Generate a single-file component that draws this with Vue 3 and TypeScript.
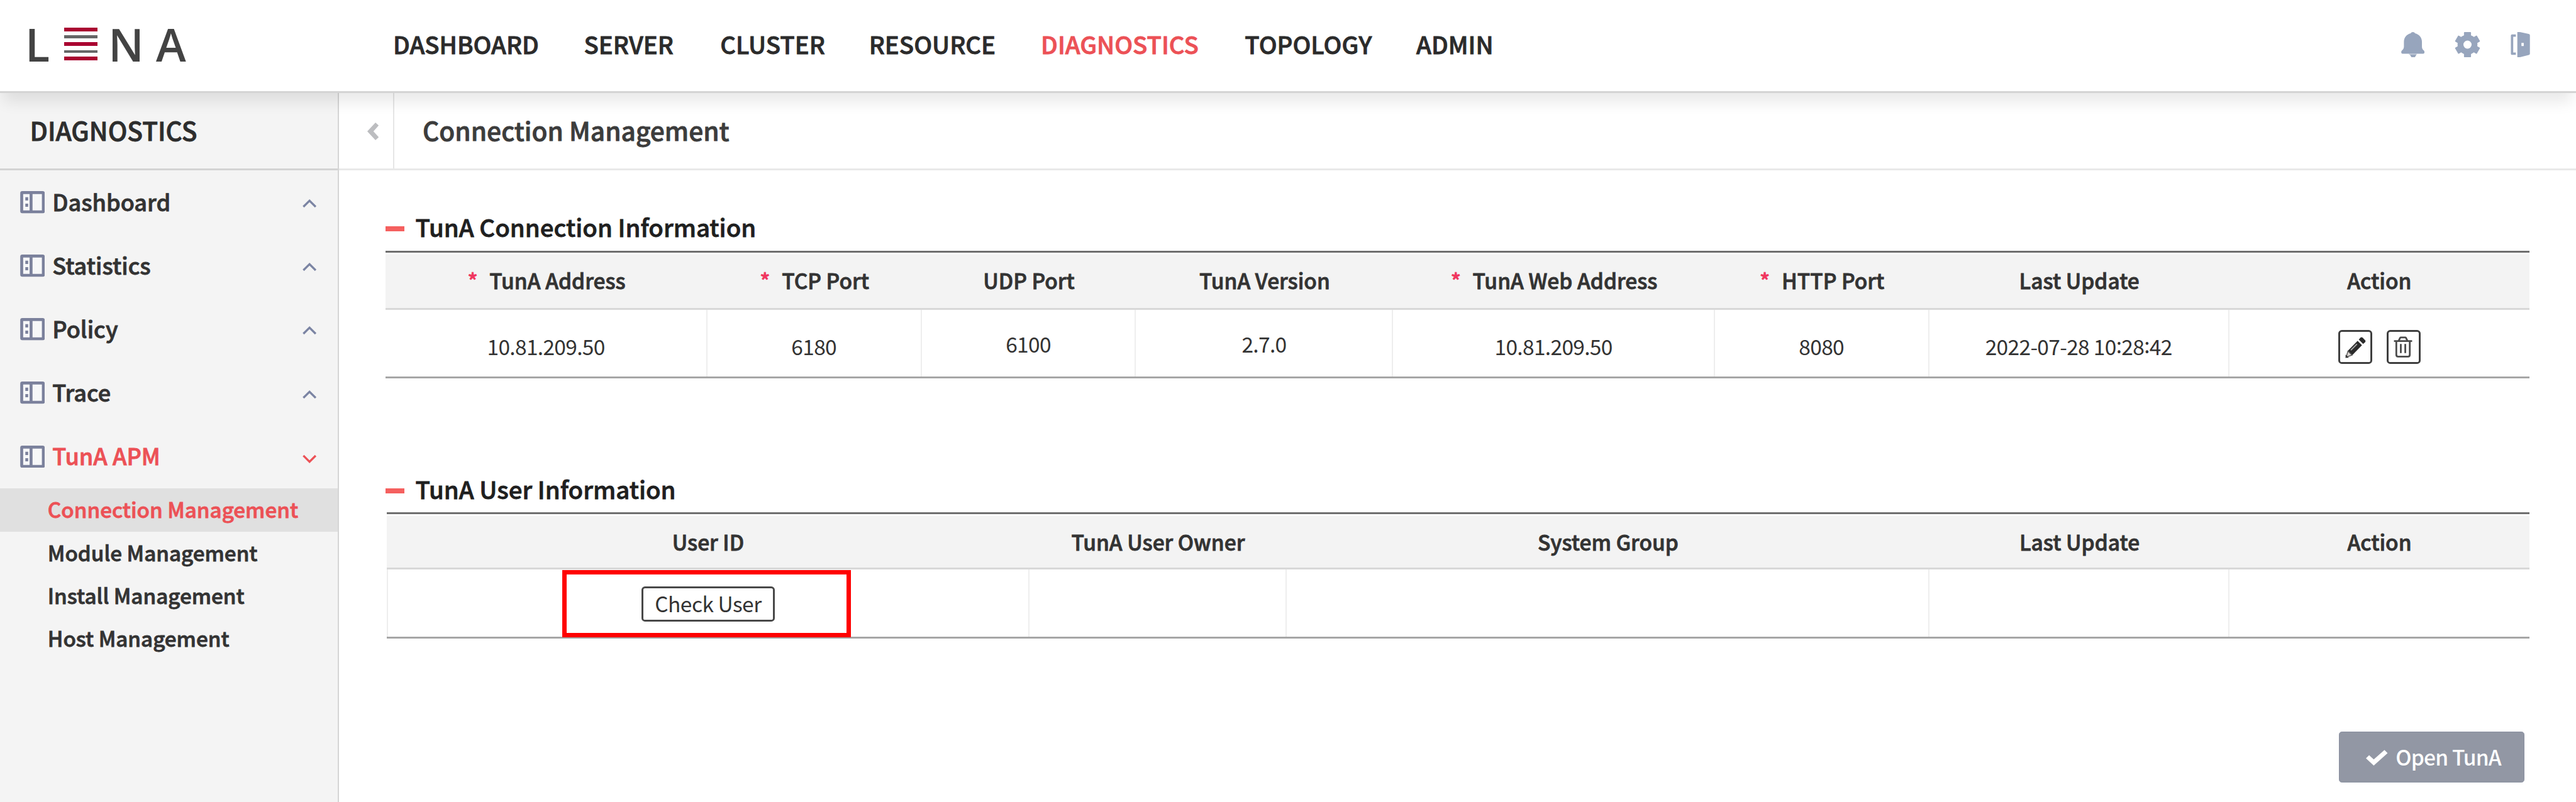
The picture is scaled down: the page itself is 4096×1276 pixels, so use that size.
<script setup lang="ts">
interface NavItem { label: string; active?: boolean }
interface Column { label: string; required?: boolean }

const nav: NavItem[] = [
  { label: 'DASHBOARD' },
  { label: 'SERVER' },
  { label: 'CLUSTER' },
  { label: 'RESOURCE' },
  { label: 'DIAGNOSTICS', active: true },
  { label: 'TOPOLOGY' },
  { label: 'ADMIN' },
]

const menu: NavItem[] = [
  { label: 'Dashboard' },
  { label: 'Statistics' },
  { label: 'Policy' },
  { label: 'Trace' },
  { label: 'TunA APM', active: true },
]

const submenu: NavItem[] = [
  { label: 'Connection Management', active: true },
  { label: 'Module Management' },
  { label: 'Install Management' },
  { label: 'Host Management' },
]

const connectionColumns: Column[] = [
  { label: 'TunA Address', required: true },
  { label: 'TCP Port', required: true },
  { label: 'UDP Port' },
  { label: 'TunA Version' },
  { label: 'TunA Web Address', required: true },
  { label: 'HTTP Port', required: true },
  { label: 'Last Update' },
  { label: 'Action' },
]

const userColumns = ['User ID', 'TunA User Owner', 'System Group', 'Last Update', 'Action']
</script>

<template>
  <div class="app">
    <header class="topbar">
      <div class="logo">
        <span class="logo-l">L</span>
        <span class="logo-bars"><i></i><i></i><i></i><i></i><i></i></span>
        <span class="logo-n">N</span>
        <span class="logo-a">A</span>
      </div>
      <nav class="nav">
        <a v-for="item in nav" :key="item.label" :class="{ active: item.active }">{{ item.label }}</a>
      </nav>
      <div class="tools">
        <svg class="bell" viewBox="0 0 40 43">
          <path d="M20 0c2 0 3 .9 3.7 2.2C31 4.200 35.500 9.500 35.500 17v8c0 3 1.200 5 3.400 6.800 1.500 1.400 1.300 5.200-1.200 5.200H2.300C-.2 37-.4 33.200 1.100 31.800 3.300 30 4.700 28 4.700 25v-8C4.700 9.500 9 4.200 16.300 2.200 17 .9 18 0 20 0z" />
          <path d="M13.500 37h13v1.800h-13z" opacity=".6" />
          <path d="M15 38.800h11l-2.500 4.200h-6z" />
        </svg>
        <svg class="gear" viewBox="-22 -21.500 44 43">
          <circle r="12" fill="none" stroke="#97a5bd" stroke-width="10" />
          <rect v-for="n in 6" :key="n" x="-6" y="-21.500" width="12" height="9" rx="1" :transform="`rotate(${n * 60})`" />
        </svg>
        <svg class="door" viewBox="0 0 34 43">
          <path d="M9 6H2.500v31H9" fill="none" stroke="#97a5bd" stroke-width="4" stroke-linejoin="round" />
          <path fill-rule="evenodd" d="M11.500 0H16l15 3.200q2 .4 2 2.300v31.500q0 1.800-2 2.200L16 43h-4.500zM18.500 18.500v5.500h4v-5.500z" />
        </svg>
      </div>
    </header>

    <div class="body">
      <aside class="sidebar">
        <h2 class="side-title">DIAGNOSTICS</h2>
        <ul class="menu">
          <li v-for="item in menu" :key="item.label" :class="{ active: item.active }">
            <svg class="panel" viewBox="0 0 42 38">
              <rect x="2.500" y="2.500" width="37" height="33" rx="1" fill="#f6f7f8" stroke="#7b819c" stroke-width="5" />
              <path d="M16 2h5v34h-5zM8.700 10.500h4.800v5.500H8.700zM8.700 21.500h4.800V27H8.700z" fill="#7b819c" />
            </svg>
            <span>{{ item.label }}</span>
            <svg class="caret" viewBox="0 0 24 16">
              <path :d="item.active ? 'M1.500 2 12 12.500 22.500 2' : 'M1.500 14 12 3.500 22.500 14'" />
            </svg>
          </li>
        </ul>
        <ul class="submenu">
          <li v-for="item in submenu" :key="item.label" :class="{ active: item.active }">{{ item.label }}</li>
        </ul>
      </aside>

      <main class="main">
        <div class="page-head">
          <div class="collapse">
            <svg viewBox="0 0 20 30"><path d="M14 0 19.500 5 10.500 15 19.500 25 14 30 0 15z" /></svg>
          </div>
          <h1>Connection Management</h1>
        </div>

        <div class="content">
          <h3 class="section-title"><i></i>TunA Connection Information</h3>
          <div class="table connection">
            <div class="row head">
              <div v-for="col in connectionColumns" :key="col.label" class="cell">
                <b v-if="col.required">*</b>{{ col.label }}
              </div>
            </div>
            <div class="row data">
              <div class="cell">10.81.209.50</div>
              <div class="cell">6180</div>
              <div class="cell raised">6100</div>
              <div class="cell raised">2.7.0</div>
              <div class="cell">10.81.209.50</div>
              <div class="cell">8080</div>
              <div class="cell"><span>2022-07-28 10<em>:</em>28<em>:</em>42</span></div>
              <div class="cell actions">
                <button class="icon-btn">
                  <svg viewBox="0 0 58 58">
                    <path d="M16.500 35.500 33 18.500l7.500 7.500L24 43z" fill="#2b2b2b" />
                    <path d="M35 16.500l3-3.300q1.700-1.600 3.600 0l4.200 4.200q1.700 1.700 0 3.600L42.500 24z" fill="#2b2b2b" />
                    <path d="M16.500 36 23.500 43 13.500 46.500z" fill="#d9d4d0" stroke="#555" stroke-width="1.500" />
                    <path d="M12.500 42v5.500H18z" fill="#333" />
                    <path d="M21.500 34.500 32 24" stroke="#aaa" stroke-width="2" />
                  </svg>
                </button>
                <button class="icon-btn">
                  <svg viewBox="0 0 58 58" fill="none" stroke="#4a4a4a" stroke-width="3">
                    <path d="M13.500 19h31M21.500 18.500l2.500-5q.5-.8 1.500-.8h7q1 0 1.500.8l2.500 5M17.500 19v23.500q0 3 3 3h17q3 0 3-3V19M25.200 24v15.500M32.800 24v15.500" />
                  </svg>
                </button>
              </div>
            </div>
          </div>

          <h3 class="section-title second"><i></i>TunA User Information</h3>
          <div class="table user">
            <div class="row head">
              <div v-for="label in userColumns" :key="label" class="cell">{{ label }}</div>
            </div>
            <div class="row data">
              <div class="cell user-cell">
                <button class="check-btn">Check User</button>
                <span class="highlight"></span>
              </div>
              <div class="cell"></div>
              <div class="cell"></div>
              <div class="cell"></div>
              <div class="cell"></div>
            </div>
          </div>

          <div class="footer">
            <button class="open-btn">
              <svg viewBox="0 0 38 27"><path d="M0 14.500 5.500 9 13.500 16.500 32 0 37.500 5.500 13.500 27z" /></svg>
              <span>Open TunA</span>
            </button>
          </div>
        </div>
      </main>
    </div>
  </div>
</template>

<style>
/* 1rem is ten design pixels of a 4400px wide layout */
html { font-size: calc(100vw / 440); }
body { margin: 0; overflow: hidden; background: #fff; }
</style>

<style scoped>
.app {
  height: 100vh;
  display: flex;
  flex-direction: column;
  overflow: hidden;
  font-family: "Noto Sans CJK KR", "Noto Sans", sans-serif;
  font-size: 3.6rem;
  font-weight: 500;
  color: #333;
}
h1, h2, h3, ul { margin: 0; padding: 0; font-weight: 500; list-style: none; }
button { margin: 0; padding: 0; font: inherit; color: inherit; box-sizing: border-box; }
svg { display: block; flex: none; }
/* headings and menus sit between medium and bold */
.nav, .side-title, .menu, .submenu, h1, .section-title, .head { -webkit-text-stroke: .09rem currentColor; }

.topbar {
  flex: none;
  box-sizing: border-box;
  height: 15.9rem;
  display: flex;
  align-items: center;
  border-bottom: .33rem solid #d4d4d4;
  background: #fff;
  box-shadow: 0 2.1rem 2.4rem -.6rem rgba(0, 0, 0, .09);
  position: relative;
  z-index: 2;
}
.logo {
  display: flex;
  align-items: center;
  width: 62.85rem;
  padding-left: 4.3rem;
  padding-bottom: .5rem;
  font: 600 7.75rem/7rem "Open Sans", sans-serif;
  color: #434343;
}
.logo-l { width: 6.65rem; }
.logo-bars {
  width: 5.7rem;
  height: 5.6rem;
  display: flex;
  flex-direction: column;
  justify-content: space-between;
}
.logo-bars i { height: .64rem; background: #a90330; }
.logo-bars i:nth-child(even) { height: .46rem; background: #666; }
.logo-n { width: 8.15rem; padding-left: 1.85rem; }
.logo-a { width: 6rem; }
.nav {
  display: grid;
  grid-template-columns: 32.6rem 23.28rem 25.4rem 29.37rem 34.83rem 29.3rem 15rem;
  font-size: 4.12rem;
  line-height: 6rem;
  padding-bottom: .6rem;
  color: #2b2b2b;
  white-space: nowrap;
}
.nav .active, .menu .active, .submenu .active { color: #ec5156; }
.tools {
  margin-left: auto;
  padding: 0 7.8rem .3rem 0;
  display: flex;
  align-items: center;
  fill: #97a5bd;
}
.bell { width: 4rem; height: 4.3rem; }
.gear { width: 4.4rem; height: 4.3rem; margin-left: 5.15rem; }
.door { width: 3.4rem; height: 4.3rem; margin-left: 5.1rem; }

.body { flex: 1; display: flex; min-height: 0; }
.sidebar {
  flex: none;
  box-sizing: border-box;
  width: 57.9rem;
  background: #f4f4f4;
  border-right: .25rem solid #d5d5d5;
}
.side-title {
  box-sizing: border-box;
  height: 13.25rem;
  padding: 3.35rem 0 0 5.1rem;
  border-bottom: .33rem solid #d3d3d3;
  font-size: 4.37rem;
  line-height: 6rem;
  color: #2d2d2d;
}
.menu li {
  display: flex;
  align-items: center;
  height: 10.86rem;
  padding: 0 3.65rem 0 3.43rem;
  font-size: 3.88rem;
  line-height: 6rem;
}
.panel { width: 4.24rem; height: 3.8rem; margin-right: 1.27rem; }
.menu span { padding-bottom: .3rem; }
.caret {
  width: 2.4rem;
  height: 1.6rem;
  margin-left: auto;
  margin-top: .4rem;
  fill: none;
  stroke: #7b84a3;
  stroke-width: 3.6;
}
.active .caret { stroke: #ec5156; margin-top: .8rem; }
.submenu li {
  height: 7.3rem;
  padding-left: 8.15rem;
  font-size: 3.57rem;
  line-height: 7rem;
}
.submenu .active { background: #e0e0e0; height: 7.45rem; }

.main { flex: 1; min-width: 0; }
.page-head {
  box-sizing: border-box;
  height: 13.25rem;
  display: flex;
  border-bottom: .33rem solid #e9e9e9;
}
.collapse {
  box-sizing: border-box;
  width: 9.5rem;
  padding: 5.1rem 0 0 4.8rem;
  border-right: .22rem solid #e6e6e6;
}
.collapse svg { width: 2rem; height: 3rem; fill: #bcbdc0; }
.page-head h1 {
  padding: 3.35rem 0 0 4.8rem;
  font-size: 4.37rem;
  line-height: 6rem;
  color: #3c3c3c;
}

.content { padding: 6.45rem 7.95rem 0 8rem; }
.section-title {
  display: flex;
  align-items: center;
  height: 6rem;
  margin-bottom: 1.25rem;
  font-size: 4.13rem;
  line-height: 6rem;
  padding-top: .3rem;
  box-sizing: border-box;
  color: #1f1f1f;
}
.section-title i {
  width: 3.2rem;
  height: .85rem;
  margin: .7rem 1.85rem 0 0;
  background: #f5605f;
}
.section-title.second { margin-top: 15.75rem; margin-bottom: 1.22rem; }

.table {
  box-sizing: border-box;
  height: 21.77rem;
  display: flex;
  flex-direction: column;
  border-top: .35rem solid #6e6e6e;
  border-bottom: .33rem solid #a6a6a6;
}
.row { display: grid; }
.connection .row { grid-template-columns: 15fr 10fr 10fr 12fr 15fr 10fr 14fr 14fr; }
.user { margin-left: .15rem; height: 21.53rem; }
.user .row { grid-template-columns: 30fr 12fr 30fr 14fr 14fr; }
.cell {
  box-sizing: border-box;
  min-width: 0;
  display: flex;
  align-items: center;
  justify-content: center;
  white-space: nowrap;
}
.head {
  flex: none;
  box-sizing: border-box;
  height: 9.45rem;
  background: #f3f3f3;
  border-top: .33rem solid #fbfbfb;
}
.head .cell { padding-bottom: .5rem; }
.head b { margin-right: 2rem; font-weight: 500; color: #f0365f; }
.data {
  flex: 1;
  box-sizing: border-box;
  border-top: .35rem solid #d8d8d8;
  font-weight: 400;
}
.data .cell {
  border-right: .22rem solid #eee;
  padding-top: .95rem;
  letter-spacing: -.072rem;
}
.data .cell:last-child { border-right: 0; }
.data .cell.raised { padding-top: .2rem; }
.data em { position: relative; top: -.3rem; font-style: normal; }
.data .cell.actions { gap: 2.4rem; padding-top: 1.35rem; }
.icon-btn {
  width: 5.85rem;
  height: 5.85rem;
  border: .33rem solid #3f3f3f;
  border-radius: .6rem;
  background: #fff;
}
.icon-btn svg { width: 5.8rem; height: 5.8rem; margin: -.33rem; }

.user .head { height: 9.15rem; }
.user .head .cell { padding-bottom: .2rem; }
.user .data .user-cell { position: relative; padding-top: .3rem; border-left: .22rem solid #eee; }
.check-btn {
  width: 22.8rem;
  height: 6rem;
  padding-bottom: .2rem;
  border: .33rem solid #484848;
  border-radius: .6rem;
  background: #fff;
  line-height: 5rem;
  letter-spacing: -.055rem;
}
.highlight {
  position: absolute;
  left: 29.75rem;
  top: .05rem;
  box-sizing: border-box;
  width: 49.3rem;
  height: 11.5rem;
  border: .76rem solid #f00;
}

.footer { display: flex; justify-content: flex-end; margin-top: 15.9rem; padding-right: .9rem; }
.open-btn {
  display: flex;
  align-items: center;
  width: 31.6rem;
  height: 8.75rem;
  padding-left: 4.5rem;
  border: .2rem solid #8a90a0;
  border-radius: .5rem;
  background: #9297a4;
  color: #fff;
  letter-spacing: -.09rem;
}
.open-btn svg { width: 3.75rem; height: 2.7rem; margin-right: 1.3rem; margin-top: .2rem; fill: #fff; }
.open-btn span { padding-bottom: .3rem; }
</style>
